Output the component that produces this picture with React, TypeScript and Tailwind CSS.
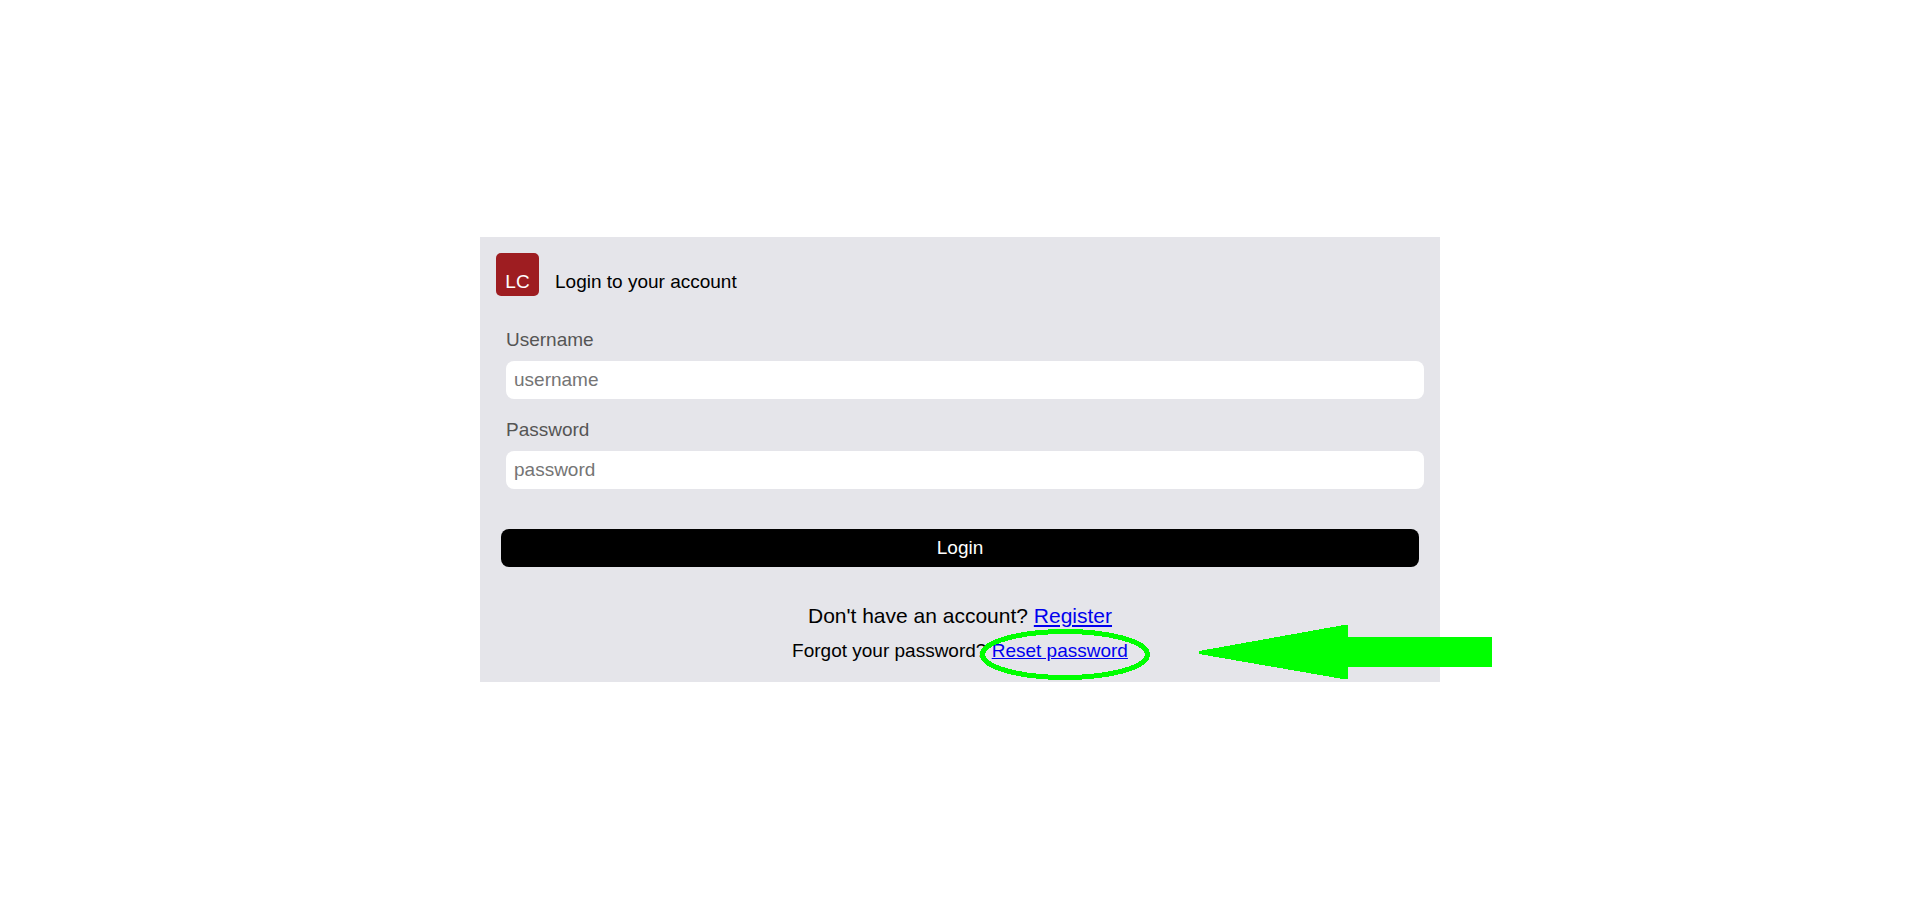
import { useState } from "react";
import type { FormEvent, InputHTMLAttributes } from "react";

interface FieldProps extends InputHTMLAttributes<HTMLInputElement> {
  id: string;
  label: string;
}

function Field({ id, label, ...rest }: FieldProps) {
  return (
    <div className="flex flex-col gap-[10px]">
      <label htmlFor={id} className="text-[#555555]">
        {label}
      </label>
      <input
        id={id}
        name={id}
        className="h-[38px] w-full rounded-lg bg-white px-2 text-black placeholder:text-[#757575]"
        {...rest}
      />
    </div>
  );
}

/** Ring and arrow that call out the reset link. Drawn over the card, ignores clicks. */
function ResetCallout() {
  return (
    <svg
      aria-hidden="true"
      viewBox="0 0 540 60"
      shapeRendering="crispEdges"
      className="pointer-events-none absolute -bottom-0.5 left-1/2 h-[60px] w-[540px]"
    >
      <ellipse cx="105" cy="30.5" rx="82.5" ry="23" fill="none" stroke="#00ff00" strokeWidth="5" />
      <path
        d="M239 27 L384 1 H388 V13 H531 L532 14 V42 L531 43 H388 V55 H383 L239 30 Z"
        fill="#00ff00"
      />
    </svg>
  );
}

export default function App() {
  const [username, setUsername] = useState("");
  const [password, setPassword] = useState("");

  const onSubmit = (e: FormEvent) => {
    e.preventDefault();
  };

  return (
    <main className="flex min-h-screen items-center justify-center bg-white font-['Liberation_Sans',Arial,sans-serif] text-[19px] leading-[22px] text-black">
      <form onSubmit={onSubmit} className="relative w-1/2 bg-[#e5e5ea] px-4 pt-4 pb-5">
        <header className="flex items-end gap-4">
          <div className="flex size-[43px] items-end justify-center rounded-[5px] bg-[#9e1d21] pb-[3px] text-white">
            LC
          </div>
          <h1 className="pb-[3px]">Login to your account</h1>
        </header>

        <div className="mt-[33px] ml-[10px] flex flex-col gap-5">
          <Field
            id="username"
            label="Username"
            type="text"
            placeholder="username"
            autoComplete="username"
            value={username}
            onChange={(e) => setUsername(e.target.value)}
          />
          <Field
            id="password"
            label="Password"
            type="password"
            placeholder="password"
            autoComplete="current-password"
            value={password}
            onChange={(e) => setPassword(e.target.value)}
          />
        </div>

        <div className="mt-10 flex px-[5px]">
          <button type="submit" className="h-[38px] w-full cursor-pointer rounded-lg bg-black text-white">
            Login
          </button>
        </div>

        <div className="mt-[37px] flex flex-col gap-3 text-center">
          <p className="text-[21px] leading-6">
            Don't have an account?{" "}
            <a href="#register" className="text-[#0000ee] underline">
              Register
            </a>
          </p>
          <p>
            Forgot your password?{" "}
            <a href="#reset-password" className="text-[#0000ee] underline">
              Reset password
            </a>
          </p>
        </div>

        <ResetCallout />
      </form>
    </main>
  );
}
